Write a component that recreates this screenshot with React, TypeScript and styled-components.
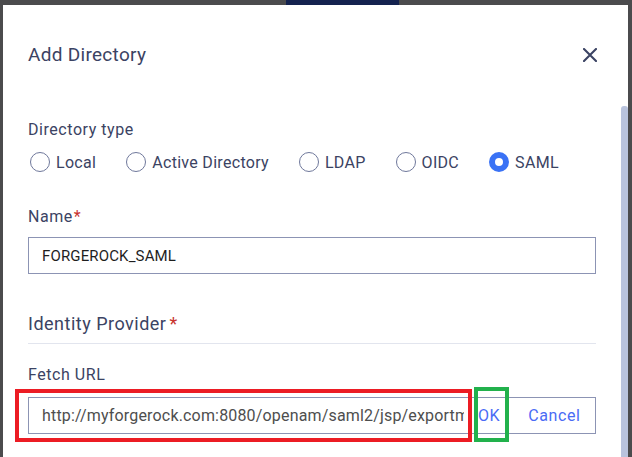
import React from "react";
import styled, { createGlobalStyle } from "styled-components";

const Global = createGlobalStyle`
  html, body { margin: 0; padding: 0; height: 100%; }
  body {
    background: #4b4b4d;
    font-family: Roboto, "Liberation Sans", Arial, sans-serif;
    overflow: hidden;
  }
  #root { height: 100%; }
`;

const Screen = styled.div`
  height: 457px;
  width: 632px;
  display: flex;
  flex-direction: column;
  background: #4b4b4d;
`;

const TopStrip = styled.div`
  height: 5px;
  display: flex;
  flex: none;
`;

const NavTab = styled.div`
  margin-left: 286px;
  width: 113px;
  background: #14224f;
`;

const Dialog = styled.div`
  flex: 1;
  margin: 0 4px 0 3px;
  background: #ffffff;
  display: flex;
  min-height: 0;
`;

const Content = styled.div`
  flex: 1;
  padding: 38px 25px 0 25px;
  display: flex;
  flex-direction: column;
`;

const ScrollTrack = styled.div`
  width: 7px;
  display: flex;
  flex-direction: column;
  flex: none;
`;

const ScrollThumb = styled.div`
  margin-top: 101px;
  flex: 1;
  background: #b9c3dd;
  border-radius: 3px 3px 0 0;
`;

const Header = styled.div`
  display: flex;
  align-items: center;
  justify-content: space-between;
  height: 24px;
`;

const Title = styled.h2`
  margin: 0;
  font-size: 19px;
  line-height: 24px;
  font-weight: 400;
  letter-spacing: 0.3px;
  color: #3b4363;
`;

const CloseButton = styled.button`
  border: none;
  background: none;
  padding: 0;
  width: 14px;
  height: 14px;
  margin-right: -1px;
  display: flex;
  align-items: center;
  justify-content: center;
  color: #3b4363;
  cursor: pointer;
`;

const Label = styled.div<{ $mt: number }>`
  margin-top: ${(p) => p.$mt}px;
  font-size: 16px;
  line-height: 20px;
  letter-spacing: 0.55px;
  color: #3b4363;
`;

const Req = styled.span<{ $gap?: boolean }>`
  color: #c8332f;
  margin-left: ${(p) => (p.$gap ? 3 : 1)}px;
`;

const RadioRow = styled.div`
  margin-top: 11px;
  height: 22px;
  display: flex;
  align-items: center;
  gap: 30px;
  padding-left: 2px;
`;

const RadioItem = styled.label`
  display: flex;
  align-items: center;
  gap: 6px;
  font-size: 16px;
  letter-spacing: 0.3px;
  color: #3b4363;
`;

const RadioCircle = styled.span<{ $on?: boolean }>`
  box-sizing: border-box;
  width: 20px;
  height: 20px;
  border-radius: 50%;
  border: ${(p) => (p.$on ? "6.5px solid #3a72f5" : "1.3px solid #6f789b")};
  background: #fff;
`;

const TextInput = styled.div`
  margin-top: 10px;
  box-sizing: border-box;
  height: 37px;
  border: 1px solid #8c94b4;
  display: flex;
  align-items: center;
  padding-left: 13px;
  font-size: 15px;
  letter-spacing: 0.15px;
  color: #1e1e1e;
`;

const SectionTitle = styled.div`
  margin-top: 39px;
  font-size: 18px;
  line-height: 22px;
  letter-spacing: 0.5px;
  color: #3b4363;
  padding-bottom: 8px;
  border-bottom: 1px solid #e2e5ee;
`;

const UrlBox = styled.div`
  position: relative;
  margin-top: 12px;
  box-sizing: border-box;
  height: 37px;
  border: 1px solid #8c94b4;
  display: flex;
  align-items: center;
`;

const UrlText = styled.div`
  width: 435px;
  flex: none;
  padding-left: 13px;
  box-sizing: border-box;
  overflow: hidden;
  white-space: nowrap;
  font-size: 16px;
  letter-spacing: 0.17px;
  color: #4e4e4e;
`;

const LinkButton = styled.button<{ $ml: number }>`
  margin-left: ${(p) => p.$ml}px;
  border: none;
  background: none;
  padding: 0;
  font-family: Roboto, "Liberation Sans", Arial, sans-serif;
  font-size: 16px;
  letter-spacing: 0.6px;
  color: #4a6bf5;
  cursor: pointer;
`;

const Annotation = styled.div<{ $color: string; $l: number; $t: number; $w: number; $h: number }>`
  position: absolute;
  box-sizing: border-box;
  left: ${(p) => p.$l}px;
  top: ${(p) => p.$t}px;
  width: ${(p) => p.$w}px;
  height: ${(p) => p.$h}px;
  border: 4px solid ${(p) => p.$color};
  pointer-events: none;
`;

const types = ["Local", "Active Directory", "LDAP", "OIDC", "SAML"];

export default function App() {
  return (
    <>
      <Global />
      <Screen>
        <TopStrip>
          <NavTab />
        </TopStrip>
        <Dialog>
          <Content>
            <Header>
              <Title>Add Directory</Title>
              <CloseButton aria-label="Close">
                <svg width="14" height="14" viewBox="0 0 14 14">
                  <path d="M1 1 L13 13 M13 1 L1 13" stroke="currentColor" strokeWidth="2.1" strokeLinecap="round" />
                </svg>
              </CloseButton>
            </Header>

            <Label $mt={53}>Directory type</Label>
            <RadioRow>
              {types.map((t) => (
                <RadioItem key={t}>
                  <RadioCircle $on={t === "SAML"} />
                  {t}
                </RadioItem>
              ))}
            </RadioRow>

            <Label $mt={34}>
              Name<Req>*</Req>
            </Label>
            <TextInput>FORGEROCK_SAML</TextInput>

            <SectionTitle>
              Identity Provider<Req $gap>*</Req>
            </SectionTitle>

            <Label $mt={21}>Fetch URL</Label>
            <UrlBox>
              <UrlText>http://myforgerock.com:8080/openam/saml2/jsp/exportmetadata.jsp</UrlText>
              <LinkButton $ml={14}>OK</LinkButton>
              <LinkButton $ml={28}>Cancel</LinkButton>
              <Annotation $color="#ec1c24" $l={-14} $t={-9} $w={457} $h={53} />
              <Annotation $color="#22b14c" $l={445} $t={-11} $w={35} $h={55} />
            </UrlBox>
          </Content>
          <ScrollTrack>
            <ScrollThumb />
          </ScrollTrack>
        </Dialog>
      </Screen>
    </>
  );
}
